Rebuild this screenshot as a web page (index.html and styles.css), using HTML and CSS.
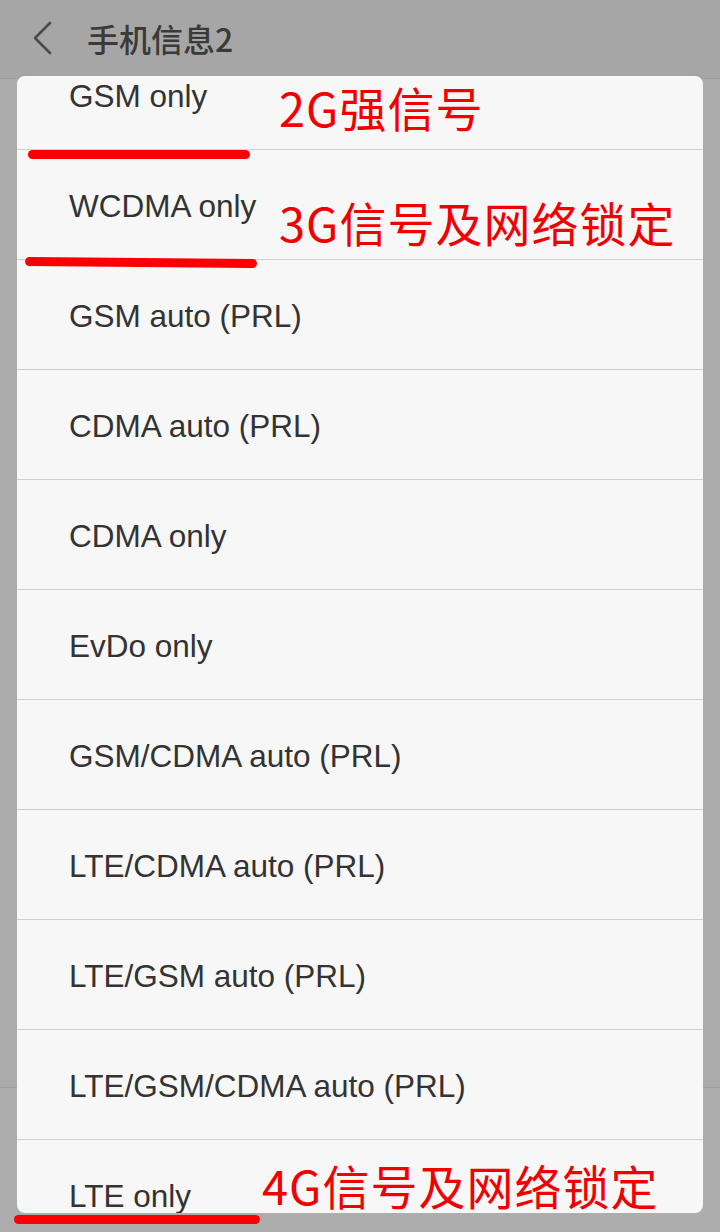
FILE: index.html
```html
<!DOCTYPE html>
<html lang="zh-CN">
<head>
<meta charset="utf-8">
<title>手机信息2</title>
<link rel="stylesheet" href="styles.css">
</head>
<body>
<div class="screen">
  <header class="topbar">
    <svg class="back" width="24" height="34" viewBox="0 0 24 34" aria-hidden="true">
      <polyline points="19,2 4,17 19,32" fill="none" stroke="#4b4b4b" stroke-width="2.6" stroke-linecap="round" stroke-linejoin="round"/>
    </svg>
    <h1 class="title">手机信息2</h1>
  </header>
  <div class="page"></div>
  <div class="bottombar"></div>

  <div class="dialog">
    <ul class="options">
      <li class="option">GSM only</li>
      <li class="option">WCDMA only</li>
      <li class="option">GSM auto (PRL)</li>
      <li class="option">CDMA auto (PRL)</li>
      <li class="option">CDMA only</li>
      <li class="option">EvDo only</li>
      <li class="option">GSM/CDMA auto (PRL)</li>
      <li class="option">LTE/CDMA auto (PRL)</li>
      <li class="option">LTE/GSM auto (PRL)</li>
      <li class="option">LTE/GSM/CDMA auto (PRL)</li>
      <li class="option">LTE only</li>
    </ul>
  </div>

  <div class="note note-2g">2G强信号</div>
  <div class="note note-3g">3G信号及网络锁定</div>
  <div class="note note-4g">4G信号及网络锁定</div>
  <div class="mark mark-2g"></div>
  <div class="mark mark-3g"></div>
  <div class="mark mark-4g"></div>
</div>
</body>
</html>
```

FILE: styles.css
```css
* { box-sizing: border-box; }
html, body {
  margin: 0;
  padding: 0;
  width: 720px;
  height: 1232px;
  overflow: hidden;
  background: #ababab;
  font-family: "Liberation Sans", "Noto Sans CJK SC", sans-serif;
}
.screen {
  position: relative;
  width: 720px;
  height: 1232px;
  display: flex;
  flex-direction: column;
}
.topbar {
  height: 79px;
  flex: none;
  background: #a6a6a6;
  border-bottom: 1px solid #9a9a9a;
  display: flex;
  align-items: center;
  padding-left: 31px;
  padding-bottom: 2px;
}
.back { display: block; }
.title {
  margin: 0 0 0 32px;
  font-family: "Noto Sans CJK SC", sans-serif;
  font-weight: 500;
  font-size: 32px;
  line-height: 1;
  color: #3a3a3a;
}
.page {
  height: 1009px;
  flex: none;
  background: #ababab;
  border-bottom: 1px solid #9d9d9d;
}
.bottombar {
  flex: 1;
  background: #adadad;
}
.dialog {
  position: absolute;
  left: 17px;
  top: 76px;
  width: 686px;
  height: 1137px;
  background: #f7f7f7;
  border-radius: 8px;
  overflow: hidden;
}
.options {
  list-style: none;
  margin: -36px 0 0 0;
  padding: 0;
}
.option {
  height: 110px;
  border-bottom: 1px solid #d0d0d0;
  display: flex;
  align-items: center;
  padding-left: 52px;
  padding-top: 3px;
  font-size: 31.5px;
  color: #333333;
  white-space: nowrap;
}
.note {
  position: absolute;
  font-family: "Noto Sans CJK SC", sans-serif;
  font-size: 47px;
  line-height: 1;
  letter-spacing: 1px;
  color: #f20000;
  white-space: nowrap;
}
.note-2g { left: 279px; top: 83px; }
.note-3g { left: 279px; top: 198px; }
.note-4g { left: 262px; top: 1161px; }
.mark {
  position: absolute;
  height: 9px;
  background: #fb0000;
  border-radius: 5px;
}
.mark-2g { left: 28px; top: 150px; width: 222px; }
.mark-3g { left: 25px; top: 258px; width: 232px; transform: rotate(0.5deg); }
.mark-4g { left: 14px; top: 1215px; width: 246px; }
```
